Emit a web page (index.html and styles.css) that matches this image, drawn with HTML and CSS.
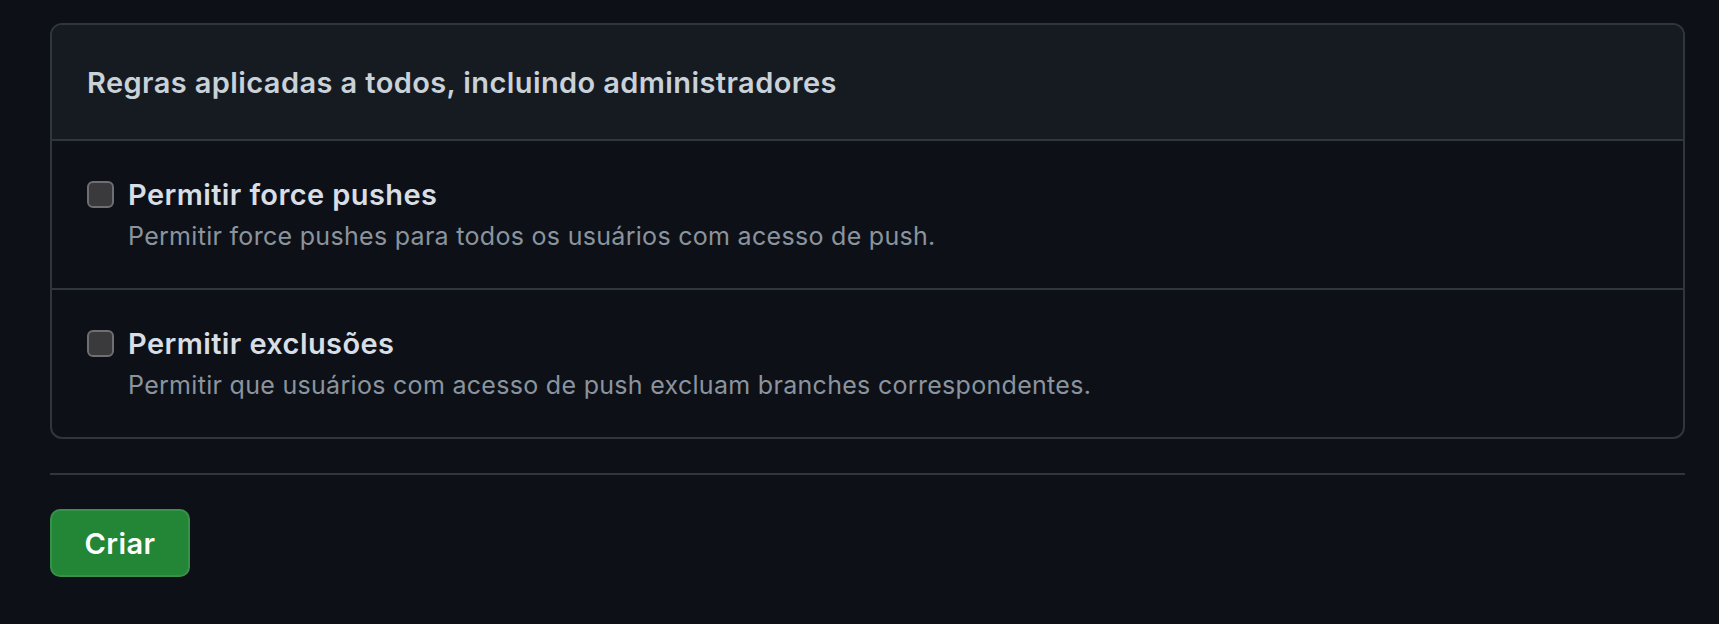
FILE: index.html
```html
<!DOCTYPE html>
<html lang="pt-BR">
<head>
    <meta charset="UTF-8">
    <meta name="viewport" content="width=device-width, initial-scale=1.0">
    <title>Regras de proteção</title>
    <link rel="stylesheet" href="styles.css">
</head>
<body>
    <div class="page">
        <div class="rules-box">
            <div class="rules-header">Regras aplicadas a todos, incluindo administradores</div>

            <label class="rule">
                <input type="checkbox" class="rule-check">
                <span class="rule-text">
                    <span class="rule-title">Permitir force pushes</span>
                    <span class="rule-desc">Permitir force pushes para todos os usuários com acesso de push.</span>
                </span>
            </label>

            <label class="rule">
                <input type="checkbox" class="rule-check">
                <span class="rule-text">
                    <span class="rule-title">Permitir exclusões</span>
                    <span class="rule-desc">Permitir que usuários com acesso de push excluam branches correspondentes.</span>
                </span>
            </label>
        </div>

        <hr class="divider">

        <button class="btn-create">Criar</button>
    </div>
</body>
</html>
```

FILE: styles.css
```css
/* Base */
body {
    margin: 0;
    background: #0d1117;
    color: #e6edf3;
    font-family: Inter, "Noto Sans", sans-serif;
}

.page {
    padding: 23px 34px 0 50px;
}

/* Rules box */
.rules-box {
    border: 2px solid #30363d;
    border-radius: 12px;
    overflow: hidden;
}

.rules-header {
    display: flex;
    align-items: center;
    height: 114px;
    padding: 0 35px;
    background: #161b22;
    border-bottom: 2px solid #30363d;
    font-size: 29px;
    letter-spacing: 0.4px;
    font-weight: 600;
    color: #c9d1d9;
}

.rule {
    display: flex;
    align-items: flex-start;
    gap: 14px;
    padding: 36px 35px 35px;
}

.rule + .rule {
    border-top: 2px solid #30363d;
}

.rule-check {
    appearance: none;
    -webkit-appearance: none;
    flex: none;
    width: 27px;
    height: 27px;
    margin: 4px 0 0;
    background: #3a3a3c;
    border: 2px solid #6e6e73;
    border-radius: 6px;
    box-sizing: border-box;
}

.rule-text {
    display: flex;
    flex-direction: column;
    gap: 6px;
}

.rule-title {
    font-size: 29px;
    letter-spacing: 0.4px;
    line-height: 36px;
    font-weight: 600;
    color: #d8dee5;
}

.rule-desc {
    font-size: 25px;
    letter-spacing: 0.3px;
    line-height: 34px;
    color: #8b949e;
}

/* Footer */
.divider {
    margin: 34px 0 0;
    border: none;
    border-top: 2px solid #30363d;
}

.btn-create {
    margin-top: 34px;
    width: 140px;
    height: 68px;
    background: #238636;
    border: 2px solid rgba(240, 246, 252, 0.1);
    border-radius: 10px;
    color: #fff;
    font-family: inherit;
    font-size: 29px;
    letter-spacing: 0.4px;
    font-weight: 600;
}
```
